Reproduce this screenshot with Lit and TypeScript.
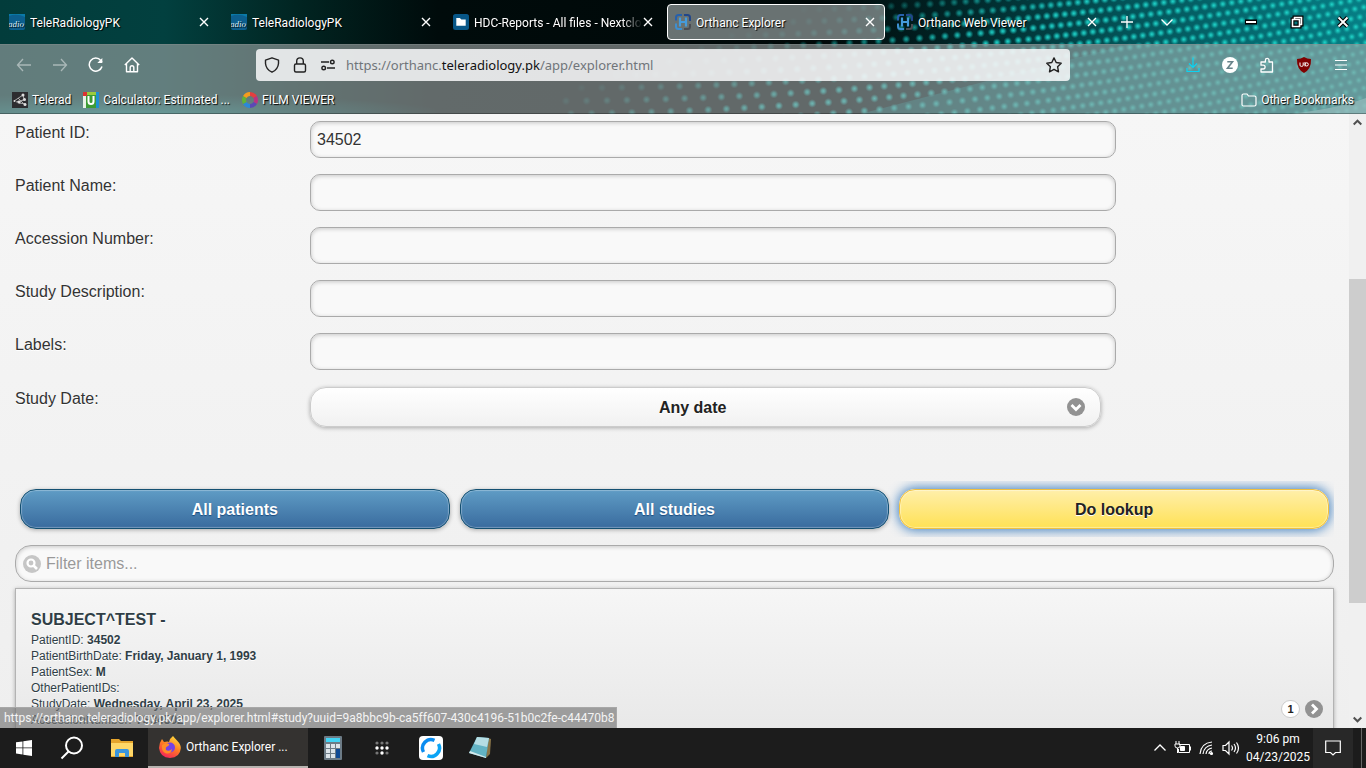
import { LitElement, html, css, svg } from "lit";
import { customElement, state } from "lit/decorators.js";

const closeIcon = html`<svg width="12" height="12" viewBox="0 0 12 12" fill="none" stroke="currentColor" stroke-width="1.4"><path d="M2 2l8 8M10 2l-8 8" /></svg>`;

const radioFavicon = html`<svg width="16" height="16" viewBox="0 0 16 16">
  <rect width="16" height="16" rx="2" fill="#0c5f8e" />
  <path d="M0 2Q8-1 16 3V0H0z" fill="#0a7aa8" />
  <text x="-1" y="13" font-family="Liberation Serif, serif" font-style="italic" font-size="9" fill="#d9edf7">adio</text>
</svg>`;

const folderFavicon = html`<svg width="16" height="16" viewBox="0 0 16 16">
  <rect width="16" height="16" rx="2.5" fill="#075687" />
  <path d="M3.3 4h3.6l1.4 1.4h4.4v6.3H3.3z" fill="#fff" />
</svg>`;

const orthancFavicon = html`<svg width="16" height="16" viewBox="0 0 16 16" fill="none" stroke-width="2">
  <path d="M1 6.500V3.500Q1 1 3.500 1H7" stroke="#2660ac" />
  <path d="M9 1h3.500Q15 1 15 3.500V7" stroke="#21468a" />
  <path d="M1 9.500v3Q1 15 3.500 15H7" stroke="#3d8fd1" />
  <path d="M9 15h3.500Q15 15 15 12.500V10" stroke="#4b4d53" />
  <path d="M5 3.500v9M11 3.500v9M5 8h6" stroke="#459bdc" stroke-width="2.200" />
</svg>`;

const tabs = [
  { title: "TeleRadiologyPK", icon: radioFavicon },
  { title: "TeleRadiologyPK", icon: radioFavicon },
  { title: "HDC-Reports - All files - Nextcloud", icon: folderFavicon },
  { title: "Orthanc Explorer", icon: orthancFavicon, active: true },
  { title: "Orthanc Web Viewer", icon: orthancFavicon },
];

@customElement("theme-backdrop")
class ThemeBackdrop extends LitElement {
  static styles = css`
    :host { display: block; overflow: hidden; }
    svg { display: block; width: 100%; height: 100%; }
  `;

  render() {
    const dots = [];
    let offset = 0;
    for (let col = 0; col < 84; col++) {
      offset += Math.max(9, 21 - col * 0.35);
      for (let row = -12; row < 26; row++) {
        const x = 540 + offset + row * 5;
        const u = Math.max(0, (x - 560) / 800);
        const y = 88 + row * (13 - u * 4) - u * u * 80;
        if (y < -4 || y > 118 || x > 1372) continue;
        const strength = Math.min(1, Math.max(0, (x - 640 + (y - 60) * 3) / 280));
        if (strength > 0.02) {
          dots.push(svg`<circle cx=${x.toFixed(1)} cy=${y.toFixed(1)} r="4.400" fill="url(#glow)" opacity=${strength.toFixed(2)} />`);
        }
      }
    }
    return html`<svg viewBox="0 0 1366 114" preserveAspectRatio="none" aria-hidden="true">
      <defs>
        <linearGradient id="base">
          <stop offset="0" stop-color="#023c3b" />
          <stop offset="0.12" stop-color="#02403f" />
          <stop offset="0.22" stop-color="#012421" />
          <stop offset="0.32" stop-color="#000b0b" />
          <stop offset="0.6" stop-color="#000808" />
          <stop offset="0.7" stop-color="#012527" />
          <stop offset="0.82" stop-color="#035257" />
          <stop offset="1" stop-color="#067f86" />
        </linearGradient>
        <radialGradient id="leftglow" cx="0.09" cy="1" r="0.24">
          <stop offset="0" stop-color="#159490" stop-opacity="0.95" />
          <stop offset="1" stop-color="#0a6b68" stop-opacity="0" />
        </radialGradient>
        <radialGradient id="glow">
          <stop offset="0" stop-color="#22d6cb" />
          <stop offset="0.4" stop-color="#17b9b2" stop-opacity="0.8" />
          <stop offset="1" stop-color="#0b8c8a" stop-opacity="0" />
        </radialGradient>
      </defs>
      <rect width="1366" height="114" fill="url(#base)" />
      <rect y="30" width="1366" height="84" fill="url(#leftglow)" />
      <path d="M860 114L1130 44H1366V114z" fill="#0a9598" opacity="0.4" />
      ${dots}
      <path d="M1290 114Q1340 108 1366 98V114z" fill="#9ef3f4" opacity="0.6" />
    </svg>`;
  }
}

@customElement("browser-chrome")
class BrowserChrome extends LitElement {
  static styles = css`
    :host { display: grid; color: #fff; font: 12px/16px Roboto, "Noto Sans", sans-serif; }
    theme-backdrop, .bars { grid-area: 1 / 1; min-width: 0; }
    theme-backdrop { height: 0; min-height: 100%; }
    .bars { z-index: 1; }
    button, a { color: inherit; font: inherit; text-decoration: none; }
    button { border: 0; padding: 0; background: none; display: flex; align-items: center; justify-content: center; }
    svg { display: block; flex: none; }
    .tabs, .tab, .nav, .marks, .mark, .url { display: flex; align-items: center; }
    .tabs { height: 44px; padding-left: 1px; text-shadow: 1px 1px 1px #000; }
    .tab { flex: 0 1 218px; min-width: 0; height: 36px; box-sizing: border-box; margin-right: 4px; padding: 0 8px 0 7px; border: 1px solid transparent; border-radius: 4px; }
    .tab.active { border-color: #fff; background: rgba(150, 160, 160, 0.7); }
    .title { flex: 1; min-width: 0; height: 16px; margin: 2px 0 0 5px; overflow: hidden; white-space: nowrap; text-align: left; }
    .title.long { -webkit-mask-image: linear-gradient(90deg, #000 88%, transparent); mask-image: linear-gradient(90deg, #000 88%, transparent); }
    .tools { display: flex; margin-left: -4px; }
    .tools button { width: 40px; height: 36px; }
    .window { display: flex; margin-left: auto; }
    .window button { width: 46px; height: 44px; }
    .lower { background: rgba(158, 164, 164, 0.62); box-shadow: inset 0 1px rgba(130, 140, 140, 0.5), inset 0 -1px rgba(0, 0, 0, 0.3); }
    .nav { height: 42px; padding: 0 6px; }
    .side { flex: 0 0 250px; display: flex; box-sizing: border-box; }
    .side button, .actions button { width: 36px; height: 32px; }
    .faded { opacity: 0.45; }
    .url { flex: 1; max-width: 814px; height: 32px; box-sizing: border-box; padding: 0 8px; gap: 12px; border-radius: 4px; background: rgba(249, 249, 250, 0.85); color: #222; }
    .address { flex: 1; min-width: 0; border: 0; outline: 0; margin-left: -2px; background: none; font: 13px/20px "Noto Sans", "Open Sans", sans-serif; color: #70757a; }
    .address b { font-weight: 400; color: #111; }
    .actions { display: flex; gap: 1px; margin: 0 1px 0 auto; }
    .marks { height: 28px; padding: 0 12px; gap: 12px; text-shadow: 1px 1px 1px #000; }
    .mark { gap: 4px; white-space: nowrap; }
    .mark.last { margin-left: auto; }
  `;

  render() {
    return html`
      <theme-backdrop></theme-backdrop>
      <div class="bars">
        <div class="tabs">
          ${tabs.map((tab) => html`<div class="tab ${tab.active ? "active" : ""}">
            ${tab.icon}<span class="title ${tab.title.length > 30 ? "long" : ""}">${tab.title}</span>
            <button aria-label="Close tab">${closeIcon}</button>
          </div>`)}
          <div class="tools">
            <button aria-label="New tab"><svg width="14" height="14" viewBox="0 0 14 14" stroke="#fff" stroke-width="1.300"><path d="M7 1v12M1 7h12" /></svg></button>
            <button aria-label="List all tabs"><svg width="14" height="14" viewBox="0 0 14 14" fill="none" stroke="#fff" stroke-width="1.300"><path d="M1.500 4.500L7 10l5.500-5.500" /></svg></button>
          </div>
          <div class="window">
            <button aria-label="Minimize"><svg width="14" height="14" viewBox="0 0 14 14"><path d="M1 4.500h12v5H1z" fill="#000" /><path d="M2 6h10v2H2z" fill="#fff" /></svg></button>
            <button aria-label="Restore"><svg width="14" height="14" viewBox="0 0 14 14" fill="none"><path d="M4.500 4V2.500h7v7H10M2.500 4.500h7v7h-7z" stroke="#000" stroke-width="4" /><path d="M4.500 4V2.500h7v7H10M2.500 4.500h7v7h-7z" stroke="#fff" stroke-width="1.600" /></svg></button>
            <button aria-label="Close"><svg width="14" height="14" viewBox="0 0 14 14"><path d="M2.500 2.500l9 9M11.500 2.500l-9 9" stroke="#000" stroke-width="4" /><path d="M2.500 2.500l9 9M11.500 2.500l-9 9" stroke="#fff" stroke-width="1.800" /></svg></button>
          </div>
        </div>
        <div class="lower">
          <div class="nav">
            <div class="side">
              <button class="faded" aria-label="Back"><svg width="16" height="16" viewBox="0 0 16 16" fill="none" stroke="#fff" stroke-width="1.300"><path d="M15 8H1.500M7 2L1.500 8 7 14" /></svg></button>
              <button class="faded" aria-label="Forward"><svg width="16" height="16" viewBox="0 0 16 16" fill="none" stroke="#fff" stroke-width="1.300"><path d="M1 8h13.500M9 2l5.500 6L9 14" /></svg></button>
              <button aria-label="Reload"><svg width="16" height="16" viewBox="0 0 16 16" fill="none" stroke="#fff" stroke-width="1.500"><path d="M14 9.500A6.500 6.500 0 1 1 12.800 3.500L14 5" /><path d="M14.300 1v5H9.300z" fill="#fff" stroke="none" /></svg></button>
              <button aria-label="Home"><svg width="16" height="16" viewBox="0 0 16 16" fill="none" stroke="#fff" stroke-width="1.400" stroke-linejoin="round"><path d="M.8 8L8 1l7.200 7M2.500 6.800v8h11v-8M6.200 14.800V10.500q0-1.800 1.800-1.800t1.800 1.800v4.300" /></svg></button>
            </div>
            <div class="url">
              <svg width="16" height="16" viewBox="0 0 16 16" fill="none" stroke="#222" stroke-width="1.400" stroke-linejoin="round"><path d="M8 .8l6.500 2.300v3.400Q14 12.500 8 15.200 2 12.500 1.500 6.500V3.100z" /></svg>
              <svg width="16" height="16" viewBox="0 0 16 16" fill="none" stroke="#222" stroke-width="1.400"><rect x="2.500" y="7" width="11" height="8" rx="1.500" /><path d="M4.700 7V4.200a3.300 3.300 0 0 1 6.600 0V7" /></svg>
              <svg width="16" height="16" viewBox="0 0 16 16" fill="none" stroke="#222" stroke-width="1.400"><path d="M1 5h8M7 11h8" /><circle cx="12.300" cy="5" r="1.800" /><circle cx="3.700" cy="11" r="1.800" /></svg>
              <div class="address" role="textbox" aria-label="Address" contenteditable="true">https://orthanc.<b>teleradiology.pk</b>/app/explorer.html</div>
              <button aria-label="Bookmark this page"><svg width="16" height="16" viewBox="0 0 16 16" fill="none" stroke="#222" stroke-width="1.400" stroke-linejoin="round"><path d="M8 .9l2.200 4.600 5 .7-3.600 3.500.9 5.100L8 12.300l-4.500 2.500.9-5.100L.8 6.200l5-.7z" /></svg></button>
            </div>
            <div class="actions">
              <button aria-label="Downloads"><svg width="14" height="16" viewBox="0 0 14 16" fill="none" stroke="#0ad4f3" stroke-width="1.200"><path d="M7 .5v10M3 6.500l4 4 4-4M1 11v3.500h12V11" /></svg></button>
              <button aria-label="Zotero"><svg width="16" height="16" viewBox="0 0 16 16"><circle cx="8" cy="8" r="8" fill="#fff" /><path d="M5.300 4.700h5.200L5.500 11.300h5.200" fill="none" stroke="#67838a" stroke-width="1.600" /></svg></button>
              <button aria-label="Extensions"><svg width="16" height="16" viewBox="0 0 16 16" fill="none" stroke="#fff" stroke-width="1.300" stroke-linejoin="round"><path d="M2 15h11.500V5H10V3.200a1.800 1.800 0 0 0-3.600 0V5H2v3.200h2.200a1.900 1.900 0 0 1 0 3.800H2z" /></svg></button>
              <button aria-label="uBlock"><svg width="16" height="16" viewBox="0 0 16 16"><path d="M8 0q3 2 7 2 .5 10-7 14Q.5 12 1 2q4 0 7-2z" fill="#800000" /><path d="M4 5.500v2.700q0 1.200 1.600 1.200t1.600-1.200V5.500M9 5v4.400" fill="none" stroke="#fff" /><circle cx="10.700" cy="7.400" r="1.600" fill="none" stroke="#fff" /></svg></button>
              <button aria-label="Menu"><svg width="12" height="12" viewBox="0 0 12 12" stroke="#fff" stroke-width="1.200"><path d="M0 1.500h12M0 6h12M0 10.500h12" /></svg></button>
            </div>
          </div>
          <div class="marks">
            <a class="mark" href="#telerad"><svg width="16" height="16" viewBox="0 0 16 16"><rect width="16" height="16" fill="#2d2d30" /><path d="M2 9l9-6 1 4-5 4 7 1M6 6l6 6M4 10l8-2" fill="none" stroke="#aaa" /><g fill="#ddd"><circle cx="11" cy="3" r="1.500" /><circle cx="12.500" cy="7.500" r="1.500" /><circle cx="7" cy="10" r="1.600" /><circle cx="13" cy="12.500" r="1.500" /><circle cx="2.500" cy="9" r="1" /></g></svg>Telerad</a>
            <a class="mark" href="#calculator"><svg width="16" height="16" viewBox="0 0 16 16"><rect width="16" height="16" fill="#3d9b35" /><path d="M0 0h3v16H0z" fill="#e9f1e7" /><path d="M0 0h4v4H0z" fill="#d33" /><path d="M13 0h3v16h-3z" fill="#1d8fd0" /><path d="M4 0h9v3H4z" fill="#9bcb3c" /><path d="M5.500 4v5.500q0 2.500 2.500 2.500t2.500-2.500V4" fill="none" stroke="#fff" stroke-width="2" /></svg>Calculator: Estimated ...</a>
            <a class="mark" href="#viewer"><svg width="16" height="16" viewBox="0 0 16 16" fill="none" stroke-width="4"><path d="M8 2a6 6 0 0 1 5.200 3" stroke="#e33f3f" /><path d="M13.200 5a6 6 0 0 1 0 6" stroke="#b93283" /><path d="M13.200 11A6 6 0 0 1 8 14" stroke="#5b48b5" /><path d="M8 14a6 6 0 0 1-5.200-3" stroke="#2b88d8" /><path d="M2.800 11a6 6 0 0 1 0-6" stroke="#62b336" /><path d="M2.800 5A6 6 0 0 1 8 2" stroke="#f59c1d" /></svg>FILM VIEWER</a>
            <a class="mark last" href="#other"><svg width="16" height="16" viewBox="0 0 16 16" fill="none" stroke="#fff" stroke-width="1.200"><path d="M1 3.500Q1 2 2.500 2H6l1.500 2h6Q15 4 15 5.500v7q0 1.500-1.500 1.500h-11Q1 14 1 12.500z" /></svg>Other Bookmarks</a>
          </div>
        </div>
      </div>`;
  }
}

const fields = [
  { id: "patient-id", label: "Patient ID:", value: "34502" },
  { id: "patient-name", label: "Patient Name:", value: "" },
  { id: "accession", label: "Accession Number:", value: "" },
  { id: "description", label: "Study Description:", value: "" },
  { id: "labels", label: "Labels:", value: "" },
];

const details = [
  ["PatientID:", "34502"],
  ["PatientBirthDate:", "Friday, January 1, 1993"],
  ["PatientSex:", "M"],
  ["OtherPatientIDs:", ""],
  ["StudyDate:", "Wednesday, April 23, 2025"],
  ["AccessionNumber:", "TS34502"],
];

@customElement("lookup-page")
class LookupPage extends LitElement {
  @state() private date = "Any date";

  static styles = css`
    :host { display: flex; position: relative; overflow: hidden; background: linear-gradient(#f6f6f6, #efefef); color: #333; font: 16px/20px "Liberation Sans", Arial, sans-serif; text-shadow: 0 1px 0 #fff; }
    .page { flex: 1; min-width: 0; padding: 7px 15px 0; overflow: hidden; }
    .field { display: flex; align-items: flex-start; height: 37px; margin-bottom: 16px; }
    .field.date { height: 41px; margin: 17px 0 53px; }
    label { width: 295px; flex: none; padding-top: 2px; }
    input { box-sizing: border-box; height: 37px; border: 1px solid #aaa; border-radius: 10px; background: #f9f9f9; box-shadow: inset 0 1px 4px rgba(0, 0, 0, 0.2); padding: 0 6px; color: #333; font: inherit; outline: 0; text-shadow: inherit; }
    .field input { width: 61.100%; }
    .picker { width: 60%; height: 40px; display: grid; border: 1px solid #ccc; border-radius: 16px; box-sizing: border-box; background: linear-gradient(#fff, #f1f1f1); box-shadow: 0 1px 4px rgba(0, 0, 0, 0.3); align-items: center; }
    .picker select, .picker svg { grid-area: 1 / 1; }
    .picker svg { justify-self: end; margin-right: 15px; pointer-events: none; }
    select { width: 100%; height: 38px; appearance: none; border: 0; padding: 2px 42px 0 16px; background: none; color: #222; font: bold 16px/20px "Liberation Sans", Arial, sans-serif; text-align: center; text-align-last: center; text-shadow: inherit; outline: 0; }
    .actions { display: grid; grid-template-columns: repeat(3, 1fr); gap: 10px; padding: 8px 5px; margin-bottom: 8px; overflow: hidden; }
    .actions button { height: 40px; padding-top: 3px; border: 1px solid #145072; border-radius: 16px; background: linear-gradient(#5f9cc5, #396b9e); box-shadow: inset 0 0 1px 1px rgba(255, 255, 255, 0.3), 0 1px 4px rgba(0, 0, 0, 0.3); color: #fff; font: bold 16px/20px "Liberation Sans", Arial, sans-serif; text-shadow: 0 1px 1px #194b7e; }
    .actions .chosen { border-color: #f0c040; background: linear-gradient(#ffefaa, #ffe155); color: #222; text-shadow: 0 1px 0 #fff; box-shadow: inset 0 0 1px 1px rgba(255, 255, 255, 0.4), 0 0 12px 1px #387bbe; }
    .search { display: grid; align-items: center; margin-bottom: 6px; }
    .search input, .search svg { grid-area: 1 / 1; }
    .search input { width: 100%; border-radius: 16px; padding-left: 30px; }
    .search input::placeholder { color: #999; opacity: 1; }
    .search svg { margin-left: 8px; z-index: 1; }
    .result { display: flex; height: 164px; padding: 21px 10px 0 15px; border: 1px solid #b3b3b3; background: linear-gradient(#f6f6f6, #e4e4e4); box-shadow: 0 1px 4px rgba(0, 0, 0, 0.3); color: #2f3e46; text-decoration: none; font-size: 12px; line-height: 16px; }
    .text { flex: 1; }
    h3 { margin: 0 0 2px; font-size: 16px; line-height: 20px; }
    p { margin: 0; }
    .badge { display: flex; align-items: center; gap: 5px; height: 18px; margin-top: 90px; }
    .count { width: 17px; height: 16px; border: 1px solid #ccc; border-radius: 10px; background: #fff; font-size: 11px; font-weight: 700; text-align: center; color: #222; }
    .scroll { flex: none; width: 17px; display: flex; flex-direction: column; align-items: center; justify-content: space-between; background: #f0f0f0; }
    .thumb { flex: 1; width: 100%; display: flex; flex-direction: column; }
    .thumb::before { content: ""; flex: 147; }
    .thumb::after { content: ""; flex: 107; }
    .thumb i { flex: 324; background: #cdcdcd; }
    .scroll svg { height: 18px; }
    .status { position: absolute; left: 0; bottom: 0; padding: 1px 1px 1px 4px; border: 1px solid #a8a8a8; border-width: 1px 1px 0 0; background: rgba(112, 112, 112, 0.64); color: #f4f4f4; font: 12px/18px Roboto, "Noto Sans", sans-serif; text-shadow: none; }
  `;

  render() {
    return html`
      <main class="page">
        ${fields.map((f) => html`<div class="field"><label for=${f.id}>${f.label}</label><input id=${f.id} .value=${f.value} /></div>`)}
        <div class="field date">
          <label for="date">Study Date:</label>
          <div class="picker">
            <select id="date" @change=${(e: Event) => (this.date = (e.target as HTMLSelectElement).value)}><option>${this.date}</option></select>
            <svg width="18" height="18" viewBox="0 0 18 18"><circle cx="9" cy="9" r="9" fill="#929292" /><path d="M4.500 7L9 11.500 13.500 7" fill="none" stroke="#fff" stroke-width="2.800" /></svg>
          </div>
        </div>
        <div class="actions">
          <button>All patients</button><button>All studies</button><button class="chosen">Do lookup</button>
        </div>
        <div class="search">
          <input aria-label="Filter items" placeholder="Filter items..." />
          <svg width="18" height="18" viewBox="0 0 18 18"><circle cx="9" cy="9" r="9" fill="#c6c6c6" /><circle cx="8" cy="8" r="3.500" fill="none" stroke="#fff" stroke-width="2.200" /><path d="M10.500 10.500l3.500 3.500" stroke="#fff" stroke-width="2.600" /></svg>
        </div>
        <a class="result" href="#study">
          <div class="text">
            <h3>SUBJECT^TEST -</h3>
            ${details.map(([name, value]) => html`<p>${name} <b>${value}</b></p>`)}
          </div>
          <div class="badge">
            <span class="count">1</span>
            <svg width="18" height="18" viewBox="0 0 18 18"><circle cx="9" cy="9" r="9" fill="#929292" /><path d="M7 4.500L11.500 9 7 13.500" fill="none" stroke="#fff" stroke-width="2.800" /></svg>
          </div>
        </a>
      </main>
      <div class="scroll">
        <svg width="9" height="18" viewBox="0 0 9 18" fill="none" stroke="#505050" stroke-width="2"><path d="M.7 10.500l3.800-3.800 3.800 3.800" /></svg>
        <div class="thumb"><i></i></div>
        <svg width="9" height="18" viewBox="0 0 9 18" fill="none" stroke="#505050" stroke-width="2"><path d="M.7 7.500l3.800 3.800 3.800-3.800" /></svg>
      </div>
      <div class="status">https://orthanc.teleradiology.pk/app/explorer.html#study?uuid=9a8bbc9b-ca5ff607-430c4196-51b0c2fe-c44470b8</div>`;
  }
}

@customElement("task-bar")
class TaskBar extends LitElement {
  static styles = css`
    :host { display: flex; height: 40px; background: #1c1c1c; color: #fff; font: 12px/18px Roboto, "Noto Sans", sans-serif; }
    button { display: flex; align-items: center; justify-content: center; width: 49px; border: 0; padding: 0; background: none; color: inherit; font: inherit; }
    .pinned { width: 48px; }
    .files { width: 52px; }
    .wide { width: 160px; justify-content: flex-start; padding-left: 10px; gap: 4px; border-bottom: 2px solid #b8b4b0; background: #343230; }
    .tray { margin-left: auto; padding-right: 4px; display: flex; align-items: center; }
    .status { display: flex; align-items: center; gap: 7px; }
    .clock { width: 68px; margin: 0 1px 0 4px; text-align: center; white-space: nowrap; }
    .note { width: 40px; height: 40px; background: #282828; }
    .edge { width: 9px; height: 40px; border-right: 1px solid #666; box-sizing: border-box; }
  `;

  render() {
    return html`
      <button class="pinned" aria-label="Start"><svg width="16" height="16" viewBox="0 0 16 16" fill="#fff"><path d="M0 2.300l6.500-.9v6.100H0zM7.300 1.300L16 0v7.500H7.300zM0 8.300h6.500v6.200L0 13.600zM7.300 8.300H16V16l-8.700-1.300z" /></svg></button>
      <button class="pinned" aria-label="Search"><svg width="24" height="24" viewBox="0 0 24 24" fill="none" stroke="#fff" stroke-width="2"><circle cx="14" cy="9.500" r="8" /><path d="M8.500 15.500L1.500 22.500" /></svg></button>
      <button class="files" aria-label="File Explorer"><svg width="22" height="20" viewBox="0 0 22 20"><path d="M0 1h8l2 2h12v16H0z" fill="#e6a52c" /><path d="M0 5h22v13H0z" fill="#ffd767" /><path d="M4 19v-6q0-2 2-2h10q2 0 2 2v6h-4v-4H8v4z" fill="#3a95dd" /></svg></button>
      <button class="wide">
        <svg width="24" height="24" viewBox="0 0 24 24"><defs><linearGradient id="fox" x1="0.8" y1="0" x2="0.3" y2="1"><stop offset="0" stop-color="#ffe13d" /><stop offset="0.5" stop-color="#ff7a24" /><stop offset="1" stop-color="#f4235b" /></linearGradient></defs><path d="M15 1q2 2.500 4 4.500 4 4 3.800 8Q22 22.500 12 23 2 22.500 1 13q0-5 3-9l2 3q4-1 5 0 1-4 4-6z" fill="url(#fox)" /><circle cx="12" cy="12.500" r="5" fill="#7542e5" /><path d="M4 10q4-3 7-1 1 1-1 2-3 1-2 4 3 2 6-1-1 6-7 4-4-3-3-8z" fill="#ff8c28" /></svg>
        Orthanc Explorer ...
      </button>
      <button aria-label="Calculator"><svg width="18" height="24" viewBox="0 0 18 24"><rect width="18" height="24" rx="1" fill="#6c7b86" /><path d="M2 2h14v4H2z" fill="#42d4f5" /><path d="M2 8h4v4H2zM7 8h4v4H7zM12 8h4v4h-4zM2 13h4v4H2zM7 13h4v4H7zM2 18h4v4H2zM7 18h4v4H7z" fill="#dce4ea" /><path d="M12 13h4v9h-4z" fill="#0f4a94" /></svg></button>
      <button aria-label="Launcher"><svg width="16" height="16" viewBox="0 0 16 16" fill="#fff"><g fill="#777"><circle cx="3" cy="3" r="1.600" /><circle cx="8" cy="3" r="1.600" /><circle cx="13" cy="3" r="1.600" /><circle cx="3" cy="13" r="1.600" /><circle cx="13" cy="13" r="1.600" /></g><circle cx="3" cy="8" r="1.700" /><circle cx="8" cy="8" r="1.700" /><circle cx="13" cy="8" r="1.700" /><circle cx="8" cy="13" r="1.700" /></svg></button>
      <button aria-label="Remote desktop"><svg width="24" height="24" viewBox="0 0 24 24" fill="none"><rect width="24" height="24" rx="4" fill="#fff" /><path d="M4.500 16A8.500 8.500 0 0 1 15.500 4.300" stroke="#0a8cf0" stroke-width="3.500" /><path d="M19.500 8A8.500 8.500 0 0 1 8.500 19.700" stroke="#0aa4f5" stroke-width="3.500" /></svg></button>
      <button aria-label="Notepad"><svg width="24" height="24" viewBox="0 0 24 24"><path d="M20 2l3 1-1 15-4 4z" fill="#8a7548" /><path d="M9 1l12 1-3 20L1 17z" fill="#62b3c4" /><path d="M9 1l12 1-2 9-13-3z" fill="#b5dde4" /><path d="M1 17l17 5v-1L2 15z" fill="#d5e9ec" /></svg></button>
      <div class="tray">
        <div class="status">
          <svg width="14" height="14" viewBox="0 0 14 14" fill="none" stroke="#fff" stroke-width="1.300"><path d="M1.500 9.500L7 4l5.500 5.500" /></svg>
          <svg width="18" height="16" viewBox="0 0 18 16" fill="none" stroke="#fff"><path d="M5 4.500h10.500v8h-11V9M16.500 6.500v4M2 1v3M5 1v3M1 4h5v2q0 2-2.500 2T1 6zM3.500 8v5" /><path d="M6.500 6.500h4v4h-4z" fill="#fff" /></svg>
          <svg width="16" height="16" viewBox="0 0 16 16" fill="none" stroke="#fff" stroke-width="1.200"><path d="M1 14Q2 3 13 2M4 14q1-8 9-9M7 14q.5-5 6-6M10 14q0-3 3-3" /><circle cx="12.500" cy="13.500" r="1" fill="#fff" /></svg>
          <svg width="18" height="16" viewBox="0 0 18 16" fill="none" stroke="#fff" stroke-width="1.200"><path d="M1 5.500h2.500L7 2v12l-3.500-3.500H1zM9.500 5.500q2 2.500 0 5M12 4q3 4 0 8M14.500 2.500q4 5.500 0 11" /></svg>
        </div>
        <div class="clock">9:06 pm<br />04/23/2025</div>
        <button class="note" aria-label="Notifications"><svg width="16" height="16" viewBox="0 0 16 16" fill="none" stroke="#fff" stroke-width="1.200"><path d="M.7 1h14.600v11.500H10.500L8 15l-2.500-2.500H.7z" /></svg></button>
        <div class="edge"></div>
      </div>`;
  }
}

@customElement("app-root")
class AppRoot extends LitElement {
  static styles = css`
    :host { display: flex; flex-direction: column; height: 100vh; overflow: hidden; }
    lookup-page { flex: 1; min-height: 0; }
    browser-chrome, task-bar { flex: none; }
  `;

  render() {
    return html`<browser-chrome></browser-chrome><lookup-page></lookup-page><task-bar></task-bar>`;
  }
}
